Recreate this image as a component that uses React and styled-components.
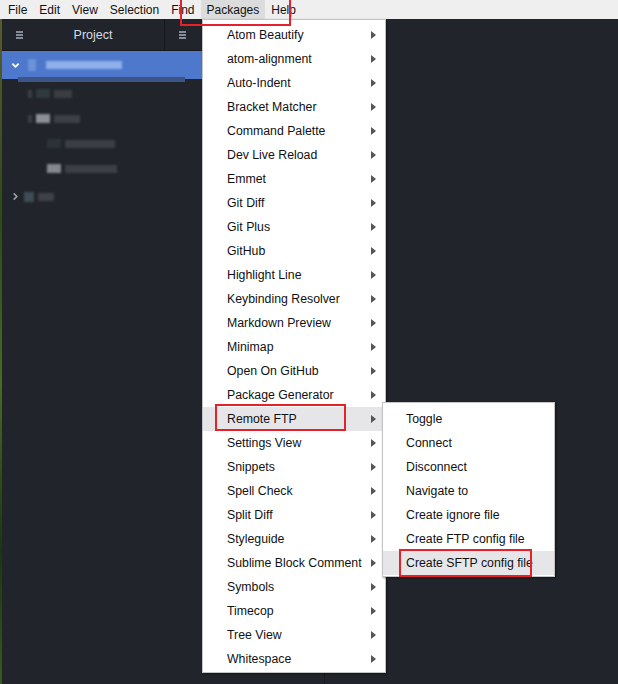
import React from "react";
import styled, { createGlobalStyle } from "styled-components";

const GlobalStyle = createGlobalStyle`
  html, body {
    margin: 0;
    padding: 0;
    background: #21252b;
  }
  * { box-sizing: border-box; }
`;

const topMenus = ["File", "Edit", "View", "Selection", "Find", "Packages", "Help"];

const packages = [
  "Atom Beautify", "atom-alignment", "Auto-Indent", "Bracket Matcher", "Command Palette",
  "Dev Live Reload", "Emmet", "Git Diff", "Git Plus", "GitHub", "Highlight Line",
  "Keybinding Resolver", "Markdown Preview", "Minimap", "Open On GitHub", "Package Generator",
  "Remote FTP", "Settings View", "Snippets", "Spell Check", "Split Diff", "Styleguide",
  "Sublime Block Comment", "Symbols", "Timecop", "Tree View", "Whitespace",
];

const remoteFtp = [
  "Toggle", "Connect", "Disconnect", "Navigate to", "Create ignore file",
  "Create FTP config file", "Create SFTP config file",
];

// blurred tree rows (the names are pixelated in the screenshot)
const treeRows = [
  { indent: 26, dot: 4, icon: "#2f3a3e", width: 18, color: "#3a3d44" },
  { indent: 26, dot: 4, icon: "#8c9096", width: 26, color: "#3c3f46" },
  { indent: 41, dot: 0, icon: "#2c3338", width: 50, color: "#3b3e45" },
  { indent: 41, dot: 0, icon: "#85888d", width: 52, color: "#3c3f46" },
];

const Screen = styled.div`
  position: relative;
  width: 618px;
  height: 684px;
  overflow: hidden;
  display: flex;
  flex-direction: column;
  font-family: "Liberation Sans", Arial, sans-serif;
  font-size: 12px;
  color: #111;
`;

const MenuBar = styled.div`
  height: 19px;
  background: #efefef;
  display: flex;
  align-items: stretch;
  padding-left: 2px;
`;

const TopItem = styled.div`
  display: flex;
  align-items: center;
  padding: 0 6px;
  font-size: 12px;
  white-space: nowrap;
  background: ${(p) => (p.$open ? "#dcdcdc" : "transparent")};
`;

const Workspace = styled.div`
  flex: 1;
  display: flex;
`;

const Desktop = styled.div`
  width: 2px;
  background: linear-gradient(180deg, #5a5a2a, #2f4a18 30%, #4b6a22 55%, #1e3410 80%, #3a5a1c);
`;

const TreePanel = styled.div`
  width: 323px;
  background: #21252b;
  border-right: 1px solid #181a1f;
  display: flex;
  flex-direction: column;
`;

const TabBar = styled.div`
  height: 32px;
  display: flex;
  border-bottom: 1px solid #181a1f;
`;

const Tab = styled.div`
  position: relative;
  width: ${(p) => p.$width}px;
  display: flex;
  align-items: center;
  justify-content: center;
  padding-left: ${(p) => p.$shift || 0}px;
  color: #d7dae0;
  font-size: 12.5px;
  border-left: ${(p) => (p.$bordered ? "1px solid #14161a" : "none")};
  border-right: ${(p) => (p.$bordered ? "1px solid #14161a" : "none")};
`;

const Hamburger = styled.span`
  position: absolute;
  left: ${(p) => p.$left}px;
  top: 12px;
  width: 7px;
  height: 8px;
  background: repeating-linear-gradient(180deg, #9da5b4 0 2px, transparent 2px 3px);
  opacity: 0.8;
`;

const SelectedRow = styled.div`
  position: relative;
  height: 28px;
  background: #4d78cc;
  display: flex;
  align-items: center;
  padding-left: 9px;
`;

const ScrollHint = styled.div`
  position: absolute;
  left: 16px;
  width: 167px;
  bottom: -3px;
  height: 5px;
  background: #3d5486;
`;

const Row = styled.div`
  height: 25px;
  display: flex;
  align-items: center;
  padding-left: ${(p) => p.$indent}px;
  gap: 4px;
`;

const Blob = styled.span`
  display: inline-block;
  width: ${(p) => p.$w}px;
  height: ${(p) => p.$h || 8}px;
  margin-left: ${(p) => p.$ml || 0}px;
  background: ${(p) => p.$c};
  filter: blur(1.2px);
`;

const Chevron = styled.svg`
  width: 9px;
  height: 9px;
  flex: none;
`;

const Editor = styled.div`
  flex: 1;
  background: #21252b;
`;

const Menu = styled.div`
  position: absolute;
  left: ${(p) => p.$left}px;
  top: ${(p) => p.$top}px;
  width: ${(p) => p.$width}px;
  background: #fff;
  border: 1px solid #c4c4c4;
  padding: ${(p) => p.$pad};
  box-shadow: 1px 1px 2px rgba(0, 0, 0, 0.45);
`;

const MenuItem = styled.div`
  position: relative;
  height: 24px;
  display: flex;
  align-items: center;
  padding-left: ${(p) => p.$indent}px;
  font-size: 12.3px;
  white-space: nowrap;
  color: #111;
  background: ${(p) => (p.$hover ? "#e6e6e9" : "transparent")};
`;

const Arrow = styled.span`
  position: absolute;
  right: 9px;
  top: 8px;
  width: 0;
  height: 0;
  border-top: 4px solid transparent;
  border-bottom: 4px solid transparent;
  border-left: 5px solid #555;
`;

const RedBox = styled.div`
  position: absolute;
  left: ${(p) => p.$x}px;
  top: ${(p) => p.$y}px;
  width: ${(p) => p.$w}px;
  height: ${(p) => p.$h}px;
  border: 2px solid #e5222b;
  pointer-events: none;
`;

const ChevronDown = () => (
  <Chevron viewBox="0 0 10 10">
    <path d="M1.5 3 L5 6.5 L8.5 3" fill="none" stroke="#fff" strokeWidth="2" />
  </Chevron>
);

const ChevronRight = () => (
  <Chevron viewBox="0 0 10 10">
    <path d="M3 1.5 L6.5 5 L3 8.5" fill="none" stroke="#9a9ea6" strokeWidth="1.8" />
  </Chevron>
);

export default function App() {
  return (
    <>
      <GlobalStyle />
      <Screen>
        <MenuBar>
          {topMenus.map((m) => (
            <TopItem key={m} $open={m === "Packages"}>{m}</TopItem>
          ))}
        </MenuBar>
        <Workspace>
          <Desktop />
          <TreePanel>
            <TabBar>
              <Tab $width={162} $shift={20}>
                <Hamburger $left={14} />
                Project
              </Tab>
              <Tab $width={40} $bordered>
                <Hamburger $left={14} />
              </Tab>
            </TabBar>
            <SelectedRow>
              <ChevronDown />
              <Blob $w={8} $h={12} $c="#6b93d6" $ml={8} />
              <Blob $w={76} $h={8} $c="#8fb0ea" $ml={10} />
              <ScrollHint />
            </SelectedRow>
            <div style={{ height: 2 }} />
            {treeRows.map((r, i) => (
              <Row key={i} $indent={r.indent}>
                <Blob $w={r.dot} $h={8} $c="#3b3e45" />
                <Blob $w={14} $h={9} $c={r.icon} />
                <Blob $w={r.width} $h={8} $c={r.color} />
              </Row>
            ))}
            <Row $indent={9} style={{ marginTop: 3 }}>
              <ChevronRight />
              <Blob $w={10} $h={10} $c="#3f4b55" />
              <Blob $w={16} $h={8} $c="#3e4148" />
            </Row>
          </TreePanel>
          <Editor />
        </Workspace>

        <Menu $left={202} $top={19} $width={184} $pad="3px 0 1px">
          {packages.map((p) => (
            <MenuItem key={p} $indent={24} $hover={p === "Remote FTP"}>
              {p}
              <Arrow />
            </MenuItem>
          ))}
        </Menu>

        <Menu $left={382} $top={402} $width={173} $pad="4px 0 1px">
          {remoteFtp.map((s) => (
            <MenuItem key={s} $indent={23} $hover={s === "Create SFTP config file"}>
              {s}
            </MenuItem>
          ))}
        </Menu>

        <RedBox $x={180} $y={-2} $w={111} $h={28} />
        <RedBox $x={215} $y={404} $w={131} $h={27} />
        <RedBox $x={399} $y={549} $w={133} $h={28} />
      </Screen>
    </>
  );
}
